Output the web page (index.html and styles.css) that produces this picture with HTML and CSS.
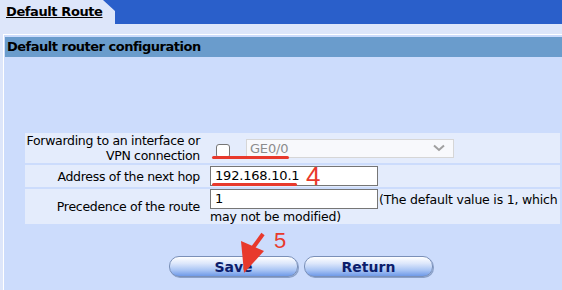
FILE: index.html
```html
<!DOCTYPE html>
<html>
<head>
<meta charset="utf-8">
<link rel="stylesheet" href="styles.css">
</head>
<body>
<div class="tabbar">
  <div class="tab"><span class="tab-label">Default Route</span></div>
  <div class="tab-fill"></div>
</div>
<div class="band"></div>
<div class="panel">
  <div class="panel-title">Default router configuration</div>
  <div class="form">
    <div class="row row-1">
      <div class="label">Forwarding to an interface or<br>VPN connection</div>
      <div class="field">
        <span class="check"></span>
        <span class="select">GE0/0<svg class="chev" width="12" height="8" viewBox="0 0 12 8"><path d="M1 1.5 L6 6 L11 1.5" fill="none" stroke="#a0a0a0" stroke-width="2"/></svg></span>
        <span class="mark mark-1"></span>
      </div>
    </div>
    <div class="row row-2">
      <div class="label">Address of the next hop</div>
      <div class="field">
        <span class="input">192.168.10.1</span>
        <span class="num num-4">4</span>
        <span class="mark mark-2"></span>
      </div>
    </div>
    <div class="row row-3">
      <div class="label">Precedence of the route</div>
      <div class="field"><div class="line"><span class="input">1</span><span class="note">(The default value is 1, which</span></div><div class="note-2">may not be modified)</div></div>
    </div>
  </div>
  <div class="buttons">
    <span class="btn">Save</span>
    <span class="btn">Return</span>
    <span class="num num-5">5</span>
    <svg class="arrow" width="30" height="42" viewBox="0 0 30 42"><path d="M24 2 L13 17" stroke="#e8392c" stroke-width="4" stroke-linecap="butt"/><path d="M2 9 L25 19 L5 41 Z" fill="#e8392c"/></svg>
  </div>
</div>
</body>
</html>
```
FILE: styles.css
```css
html, body { margin: 0; padding: 0; }
body {
  width: 562px;
  height: 290px;
  overflow: hidden;
  background: #dde6fa;
  font-family: "DejaVu Sans", Verdana, sans-serif;
  font-size: 12px;
  color: #000;
}
.tabbar { display: flex; height: 24px; }
.tab { width: 103px; padding-left: 6px; box-sizing: border-box; white-space: nowrap; }
.tab-label { display: block; font-weight: bold; text-decoration: underline; font-size: 13px; line-height: 24px; letter-spacing: -0.4px; }
.tab-fill {
  flex: 1;
  background: #2a5fca;
  clip-path: polygon(0 0, 100% 0, 100% 100%, 12px 100%, 12px 11px);
}
.band { height: 10px; }
.panel {
  margin-left: 3px;
  border-left: 1px solid #ffffff;
  border-top: 1px solid #ffffff;
  background: #ccdcfc;
  height: 256px;
  padding-top: 2px;
  box-sizing: border-box;
}
.panel-title {
  margin-left: 1px;
  background: #6a9ccc;
  height: 20px;
  line-height: 20px;
  font-weight: bold;
  font-size: 13px;
  padding-left: 2px;
  letter-spacing: -0.5px;
}
.form {
  margin: 76px 0 0 21px;
  width: 535px;
  display: flex;
  flex-direction: column;
  gap: 2px;
}
.row { display: flex; background: #e4ecfc; }
.label {
  width: 175px;
  text-align: right;
  padding-right: 10px;
  line-height: 15px;
  font-size: 12.5px;
  letter-spacing: -0.3px;
  flex: none;
  align-self: center;
}
.row-1 { height: 30px; }
.row-2 { height: 22px; }
.row-3 { height: 35px; }
.field { position: relative; display: flex; align-items: center; flex: 1; font-size: 12.5px; letter-spacing: -0.2px; }
.row-3 .field { display: flex; flex-direction: column; align-items: flex-start; }
.line { display: flex; align-items: center; height: 20px; white-space: nowrap; }
.note { margin-left: 1px; }
.note-2 { line-height: 15px; }
.check {
  width: 12px; height: 12px;
  border: 1px solid #767676;
  border-radius: 3px;
  background: #fff;
  margin-left: 6px;
  margin-top: 6px;
}
.select {
  margin-left: 16px;
  width: 208px;
  height: 19px;
  border: 1px solid #d6d6d6;
  background: #f8f9fc;
  color: #8c8c8c;
  display: flex;
  align-items: center;
  justify-content: space-between;
  padding: 0 8px 0 3px;
  box-sizing: border-box;
  font-size: 13px;
}
.input {
  display: inline-block;
  width: 168px;
  height: 20px;
  border: 1px solid #767676;
  background: #fff;
  box-sizing: border-box;
  padding-left: 4px;
  line-height: 18px;
  font-size: 13px;
  flex: none;
}
.num { color: #e8392c; font-family: "Liberation Sans", Arial, sans-serif; line-height: 20px; position: absolute; }
.num-4 { left: 96px; top: -1px; font-size: 26px; line-height: 24px; }
.mark { position: absolute; height: 3px; background: #e8392c; border-radius: 2px; }
.mark-1 { left: 2px; width: 77px; top: 23px; }
.mark-2 { left: 2px; width: 85px; top: 18px; }
.buttons {
  position: relative;
  display: flex;
  justify-content: center;
  gap: 6px;
  margin-top: 32px;
  padding-left: 36px;
}
.btn {
  width: 129px;
  height: 21px;
  border-radius: 10px;
  border: 1px solid #7a90b8;
  box-sizing: border-box;
  background: linear-gradient(#ffffff 0%, #dbe6fb 35%, #a8c4f4 70%, #6f9ae8 100%);
  color: #0c1d6b;
  font-weight: bold;
  font-size: 14px;
  text-align: center;
  line-height: 20px;
  box-shadow: 1px 1px 0 #8aa0c8;
}
.num-5 { left: 270px; top: -25px; font-size: 22px; }
.arrow { position: absolute; left: 235px; top: -24px; }
```
